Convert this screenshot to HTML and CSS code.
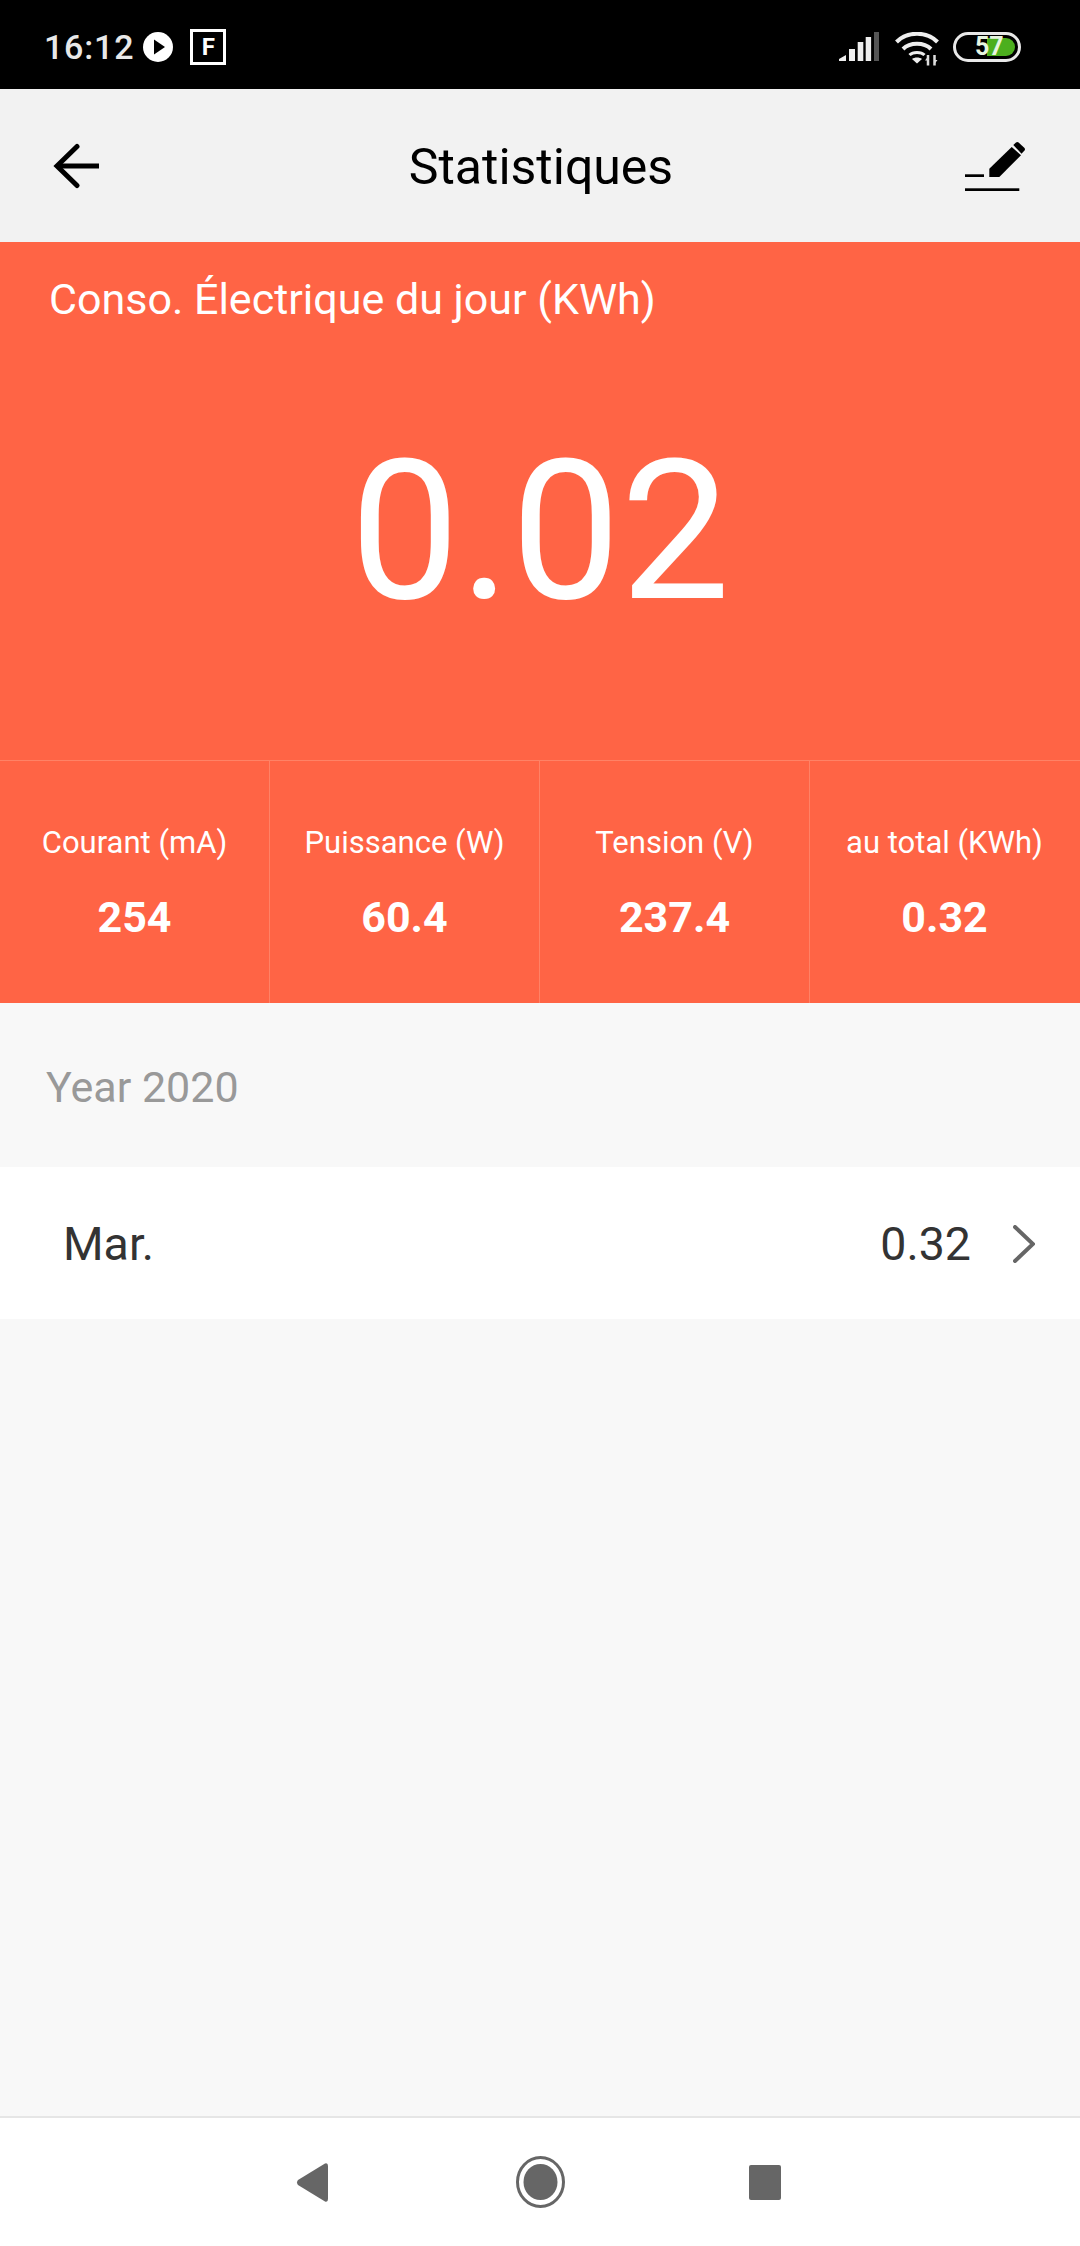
FILE: index.html
```html
<!DOCTYPE html>
<html lang="fr">
<head>
<meta charset="UTF-8" />
<meta name="viewport" content="width=device-width, initial-scale=1" />
<title>Statistiques</title>
<link rel="stylesheet" href="styles.css">
</head>
<body>

<div class="status">
  <div class="status-left">
    <span class="time">16:12</span>
    <svg class="ic-play" width="30" height="30" viewBox="0 0 30 30"><circle cx="15" cy="15" r="15" fill="#fff"/><path d="M11 7.5 L22 15 L11 22.5 Z" fill="#000"/></svg>
    <span class="f-box">F</span>
  </div>
  <div class="status-right">
    <svg width="40" height="30" viewBox="0 0 40 30"><path d="M0 29 L0 27 L7 23 V29 Z" fill="#eee"/><rect x="10" y="17" width="6" height="12" fill="#eee"/><rect x="18.700" y="10" width="5.600" height="19" fill="#eee"/><rect x="26.700" y="5" width="5.400" height="24" fill="#eee"/><rect x="35" y="0" width="5" height="29" fill="#555"/></svg>
    <svg class="ic-wifi" width="44" height="34" viewBox="0 0 44 34"><g fill="none" stroke="#eee" stroke-width="4"><path d="M1.500 10 C12 -1 32 -1 42.500 10"/><path d="M8 17 C15 10 29 10 36 17"/></g><path d="M14.500 23 C18 19.500 26 19.500 29.500 23" fill="none" stroke="#eee" stroke-width="3"/><path d="M17 27 C19.500 25 24.500 25 27 27 L22 31.500 Z" fill="#eee"/><path d="M33 23 V33.500 M39.500 23 V33.500" stroke="#ddd" stroke-width="2.500"/><path d="M30 28.500 L33 24.500 V28.500 Z M42.500 28 L39.500 32 V28 Z" fill="#ddd"/></svg>
    <div class="battery">
      <div class="battery-fill"></div>
      <span class="battery-num">57</span>
    </div>
  </div>
</div>

<div class="topbar">
  <svg width="46" height="46" viewBox="0 0 46 46"><g fill="none" stroke="#000" stroke-width="5" stroke-linecap="round"><path d="M5 23 H46" stroke-linecap="butt"/><path d="M24 3.500 L4 23 L24 42.500"/></g></svg>
  <h1 class="title">Statistiques</h1>
  <svg class="ic-edit" width="60" height="50" viewBox="0 0 60 50"><path d="M24.300 27.700 L46.700 6 L56 14.300 L34.300 36 H24.300 Z" fill="#000"/><path d="M48.300 4 L51 1.500 Q52.300 0.300 53.600 1.500 L59.500 7 Q60.500 8.300 59.500 9.500 L56.500 12.700 Z" fill="#000"/><rect x="0" y="33.300" width="19" height="2.700" fill="#000"/><rect x="0" y="47.300" width="54.300" height="2.700" fill="#000"/></svg>
</div>

<section class="hero">
  <div class="hero-label">Conso. Électrique du jour (KWh)</div>
  <div class="hero-value">0.02</div>
  <div class="stats">
    <div class="stat"><div class="stat-label">Courant (mA)</div><div class="stat-value">254</div></div>
    <div class="stat"><div class="stat-label">Puissance (W)</div><div class="stat-value">60.4</div></div>
    <div class="stat"><div class="stat-label">Tension (V)</div><div class="stat-value">237.4</div></div>
    <div class="stat"><div class="stat-label">au total (KWh)</div><div class="stat-value">0.32</div></div>
  </div>
</section>

<main class="content">
  <div class="year">Year 2020</div>
  <div class="row">
    <span class="row-month">Mar.</span>
    <span class="row-value">0.32</span>
    <svg class="chevron" width="22" height="38" viewBox="0 0 22 38"><path d="M2 2 L20 19 L2 36" fill="none" stroke="#666" stroke-width="4" stroke-linecap="round"/></svg>
  </div>
</main>

<div class="navbar">
  <svg width="32" height="39" viewBox="0 0 32 39"><path d="M29 0.500 Q32 -0.500 32 3 V36 Q32 39.500 29 38.500 L2 22 Q0 19.500 2 17 Z" fill="#666"/></svg>
  <svg class="nav-home" width="49" height="52" viewBox="0 0 49 52"><ellipse cx="24.500" cy="26" rx="23" ry="24.500" fill="none" stroke="#666" stroke-width="3"/><ellipse cx="24.500" cy="26" rx="17" ry="18" fill="#666"/></svg>
  <div class="nav-square"></div>
</div>

</body>
</html>
```

FILE: styles.css
```css
* {
  box-sizing: border-box;
}

body {
  margin: 0;
  width: 1080px;
  height: 2246px;
  display: flex;
  flex-direction: column;
  background: #f8f8f8;
  font-family: Roboto, "Noto Sans", sans-serif;
  overflow: hidden;
}

/* barre du haut */
.status {
  height: 89px;
  background: #000;
  display: flex;
  align-items: center;
  justify-content: space-between;
  padding: 5px 59px 0 44px;
}

.status-left,
.status-right {
  display: flex;
  align-items: center;
}

.time {
  color: #e8e8e8;
  font-size: 34px;
  font-weight: 500;
  letter-spacing: 0.8px;
}

.ic-play {
  margin-left: 9px;
}

.f-box {
  margin-left: 17px;
  width: 36px;
  height: 36px;
  border: 3px solid #fff;
  color: #fff;
  font-size: 24px;
  font-weight: 700;
  display: flex;
  align-items: center;
  justify-content: center;
}

.ic-wifi {
  margin-left: 16px;
  margin-top: 4px;
}

.battery {
  position: relative;
  margin-left: 14px;
  width: 68px;
  height: 30px;
  border: 3px solid #e8e8e8;
  border-radius: 15px;
}

.battery-fill {
  position: absolute;
  left: 31px;
  top: 3px;
  width: 28px;
  height: 18px;
  background: #4caf1e;
  border-radius: 0 9px 9px 0;
}

.battery-num {
  position: absolute;
  left: 19px;
  top: 0;
  line-height: 24px;
  font-size: 25px;
  font-weight: 700;
  color: #e8f5e0;
}

.topbar {
  height: 153px;
  background: #f2f2f2;
  display: grid;
  grid-template-columns: 1fr auto 1fr;
  align-items: center;
  padding: 0 53px;
}

.ic-edit {
  justify-self: end;
  margin-right: 2px;
}

.title {
  margin: 0;
  padding: 2px 0 0 2px;
  font-size: 50px;
  font-weight: 400;
  color: #000;
}

.hero {
  height: 761px;
  background: #ff6445;
  color: #fff;
  display: flex;
  flex-direction: column;
}

.hero-label {
  padding: 32px 0 0 49px;
  font-size: 43px;
  line-height: 50px;
}

.hero-value {
  flex: 1;
  display: flex;
  align-items: center;
  justify-content: center;
  font-size: 195px;
  font-weight: 400;
  padding-bottom: 22px;
}

.stats {
  height: 243px;
  display: grid;
  grid-template-columns: repeat(4, 1fr);
  border-top: 1px solid #ff8266;
}

.stat {
  border-right: 1px solid #ff8266;
  display: flex;
  flex-direction: column;
  align-items: center;
  padding-top: 64px;
}

.stat:last-child {
  border-right-color: transparent;
}

.stat-label {
  font-size: 31px;
  line-height: 36px;
}

.stat-value {
  margin-top: 32px;
  font-size: 43px;
  line-height: 48px;
  font-weight: 700;
}

.content {
  flex: 1;
}

.year {
  height: 164px;
  padding: 3px 0 0 46px;
  display: flex;
  align-items: center;
  font-size: 43px;
  color: #999;
}

.row {
  height: 152px;
  background: #fff;
  display: flex;
  align-items: center;
  padding: 2px 45px 0 63px;
  color: #333;
  font-size: 46.500px;
}

.row-month {
  flex: 1;
}

.chevron {
  margin-left: 42px;
}

.navbar {
  height: 130px;
  background: #fff;
  border-top: 2px solid #e6e6e6;
  display: flex;
  align-items: center;
  justify-content: center;
  gap: 185px;
  padding-right: 3px;
}

.nav-home {
  margin: 0 -1px 0 3px;
}

.nav-square {
  width: 32px;
  height: 35px;
  background: #666;
  border-radius: 2px;
}
```
